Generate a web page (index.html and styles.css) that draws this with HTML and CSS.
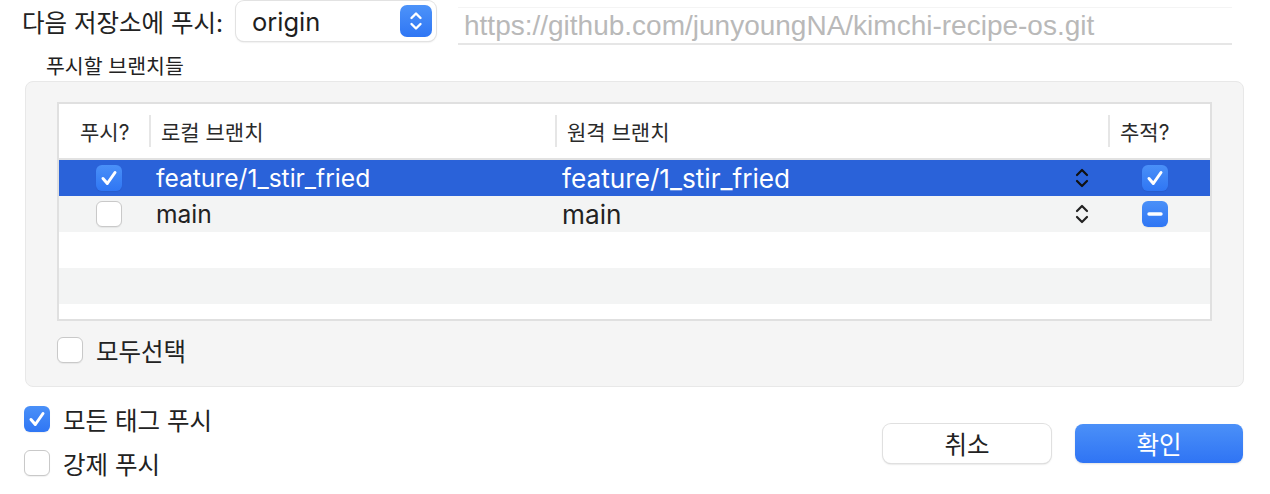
FILE: index.html
```html
<!DOCTYPE html>
<html lang="ko">

<head>
    <meta charset="UTF-8">
    <meta name="viewport" content="width=device-width, initial-scale=1.0">
    <title>푸시</title>

    <link rel="stylesheet" href="styles.css">
</head>

<body>
    <div class="dialog">
        <div class="toprow">
            <span class="toplabel">다음 저장소에 푸시:</span>
            <div class="popup">
                <span class="popuptxt">origin</span>
                <span class="stepper">
                    <svg width="16" height="22" viewBox="0 0 16 22">
                        <path d="M3.5 8 L8 3.5 L12.5 8 M3.5 14 L8 18.5 L12.5 14" fill="none" stroke="white"
                            stroke-width="2.4" stroke-linecap="round" stroke-linejoin="round" />
                    </svg>
                </span>
            </div>
            <div class="urlfield">https://github.com/junyoungNA/kimchi-recipe-os.git</div>
        </div>

        <div class="grouptitle">푸시할 브랜치들</div>
        <div class="group">
            <div class="table">
                <div class="row head">
                    <div class="cell c1">푸시?</div>
                    <div class="cell c2 sep">로컬 브랜치</div>
                    <div class="cell c3 sep">원격 브랜치</div>
                    <div class="cell c4 sep">추적?</div>
                </div>
                <div class="row selected">
                    <div class="cell c1"><span class="check on"><svg viewBox="0 0 26 26"><path d="M7 13.5 L11.3 18.5 L19 7.5" /></svg></span></div>
                    <div class="cell c2">feature/1_stir_fried</div>
                    <div class="cell c3 remote">feature/1_stir_fried
                        <svg class="chev" width="16" height="24" viewBox="0 0 16 24"><path d="M3 9 L8 4 L13 9 M3 15 L8 20 L13 15" /></svg>
                    </div>
                    <div class="cell c4"><span class="check on"><svg viewBox="0 0 26 26"><path d="M7 13.5 L11.3 18.5 L19 7.5" /></svg></span></div>
                </div>
                <div class="row alt">
                    <div class="cell c1"><span class="check"></span></div>
                    <div class="cell c2">main</div>
                    <div class="cell c3 remote">main
                        <svg class="chev" width="16" height="24" viewBox="0 0 16 24"><path d="M3 9 L8 4 L13 9 M3 15 L8 20 L13 15" /></svg>
                    </div>
                    <div class="cell c4"><span class="check on mixed"><svg viewBox="0 0 26 26"><path d="M7 13 L19 13" /></svg></span></div>
                </div>
                <div class="row"></div>
                <div class="row alt"></div>
                <div class="tail"></div>
            </div>
            <div class="opt selectall">
                <span class="check"></span>
                <span>모두선택</span>
            </div>
        </div>

        <div class="bottom">
            <div class="options">
                <div class="opt">
                    <span class="check on"><svg viewBox="0 0 26 26"><path d="M7 13.5 L11.3 18.5 L19 7.5" /></svg></span>
                    <span>모든 태그 푸시</span>
                </div>
                <div class="opt">
                    <span class="check"></span>
                    <span>강제 푸시</span>
                </div>
            </div>
            <div class="buttons">
                <button class="btn">취소</button>
                <button class="btn primary">확인</button>
            </div>
        </div>
    </div>
</body>

</html>
```

FILE: styles.css
```css
body {
    margin: 0;
    background-color: #ffffff;
    font-family: 'Inter', 'Noto Sans CJK KR', sans-serif;
    color: #222222;
}

.dialog {
    width: 1270px;
    height: 494px;
    overflow: hidden;
}

/* 상단 저장소 선택 */
.toprow {
    display: flex;
    align-items: center;
    height: 42px;
    padding-left: 22px;
}

.toplabel {
    font-size: 24.5px;
    width: 214px;
}

.popup {
    display: flex;
    align-items: center;
    justify-content: space-between;
    width: 200px;
    height: 40px;
    box-sizing: border-box;
    background: white;
    border-radius: 8px;
    box-shadow: 0 0 0 1px #e2e2e2, 0 1px 2px rgba(0, 0, 0, 0.18);
    padding: 0 4px 0 16px;
}

.popuptxt {
    font-size: 25.5px;
    color: #1e1e1e;
}

.stepper {
    display: flex;
    align-items: center;
    justify-content: center;
    width: 32px;
    height: 32px;
    border-radius: 7px;
    background: linear-gradient(#4d93f9, #2f76f4);
}

.urlfield {
    margin-left: 22px;
    margin-top: 10px;
    width: 774px;
    height: 38px;
    box-sizing: border-box;
    padding-left: 6px;
    border-top: 1px solid #f4f4f4;
    border-bottom: 2px solid #e6e6e6;
    font-family: 'Liberation Sans', sans-serif;
    font-size: 28px;
    line-height: 36px;
    color: #b9b9b9;
}

/* 브랜치 그룹 */
.grouptitle {
    font-size: 20.5px;
    margin: 11px 0 0 46px;
    height: 28px;
    line-height: 28px;
}

.group {
    margin: 0 26px 0 25px;
    height: 306px;
    box-sizing: border-box;
    background: #f5f5f5;
    border: 1px solid #e8e8e8;
    border-radius: 8px;
    padding: 20px 31px 0 31px;
}

.table {
    background: white;
    border: 2px solid #e0e0e0;
}

.row {
    display: grid;
    grid-template-columns: 90px 406px 553px 1fr;
    height: 36px;
    align-items: center;
    font-size: 24.6px;
}

.row.head {
    height: 54px;
    border-bottom: 2px solid #e2e2e2;
    font-size: 21px;
    color: #2a2a2a;
}

.row.alt {
    background: #f3f4f4;
}

.row.selected {
    background: #2a62d9;
    color: white;
}

.tail {
    height: 15px;
}

.cell {
    display: flex;
    align-items: center;
    height: 100%;
    box-sizing: border-box;
}

.head .cell {
    padding-left: 10px;
    padding-right: 0;
    justify-content: flex-start;
}

.head .c1 {
    padding-left: 21px;
}

.head .sep {
    border-left: 2px solid #e6e6e6;
    height: 32px;
}

.c1 {
    justify-content: center;
    padding-left: 10px;
}

.c2 {
    padding-left: 7px;
}

.c3 {
    padding-left: 7px;
}

.remote {
    justify-content: space-between;
    font-size: 26.2px;
    padding-right: 18px;
}

.chev path {
    fill: none;
    stroke: #222;
    stroke-width: 2.2;
    stroke-linecap: round;
    stroke-linejoin: round;
}

.selected .chev path {
    stroke: #111;
}

.c4 {
    justify-content: center;
    padding-right: 8px;
}

/* 체크박스 */
.check {
    display: inline-flex;
    width: 26px;
    height: 26px;
    box-sizing: border-box;
    border-radius: 6px;
    background: white;
    border: 1px solid #c9c9c9;
    box-shadow: 0 1px 1px rgba(0, 0, 0, 0.06);
    flex-shrink: 0;
}

.check.on {
    background: linear-gradient(#4a90f8, #2f76f4);
    border: none;
}

.check svg {
    width: 26px;
    height: 26px;
}

.check svg path {
    fill: none;
    stroke: white;
    stroke-width: 3;
    stroke-linecap: round;
    stroke-linejoin: round;
}

.mixed svg path {
    stroke-width: 3.4;
}

.opt {
    display: flex;
    align-items: center;
    gap: 13px;
    font-size: 24.5px;
    height: 44px;
}

.selectall {
    margin-top: 7px;
}

/* 하단 */
.bottom {
    display: flex;
    justify-content: space-between;
    padding: 10px 27px 0 24px;
}

.buttons {
    display: flex;
    gap: 24px;
    padding-top: 27px;
}

.btn {
    width: 168px;
    height: 39px;
    border: none;
    border-radius: 8px;
    background: white;
    box-shadow: 0 0 0 1px #e0e0e0, 0 1px 2px rgba(0, 0, 0, 0.25);
    font-family: 'Inter', 'Noto Sans CJK KR', sans-serif;
    font-size: 24.5px;
    color: #222;
}

.btn.primary {
    background: linear-gradient(#4b90f8, #2f74f4);
    box-shadow: 0 1px 2px rgba(0, 0, 0, 0.12);
    color: white;
}
```
